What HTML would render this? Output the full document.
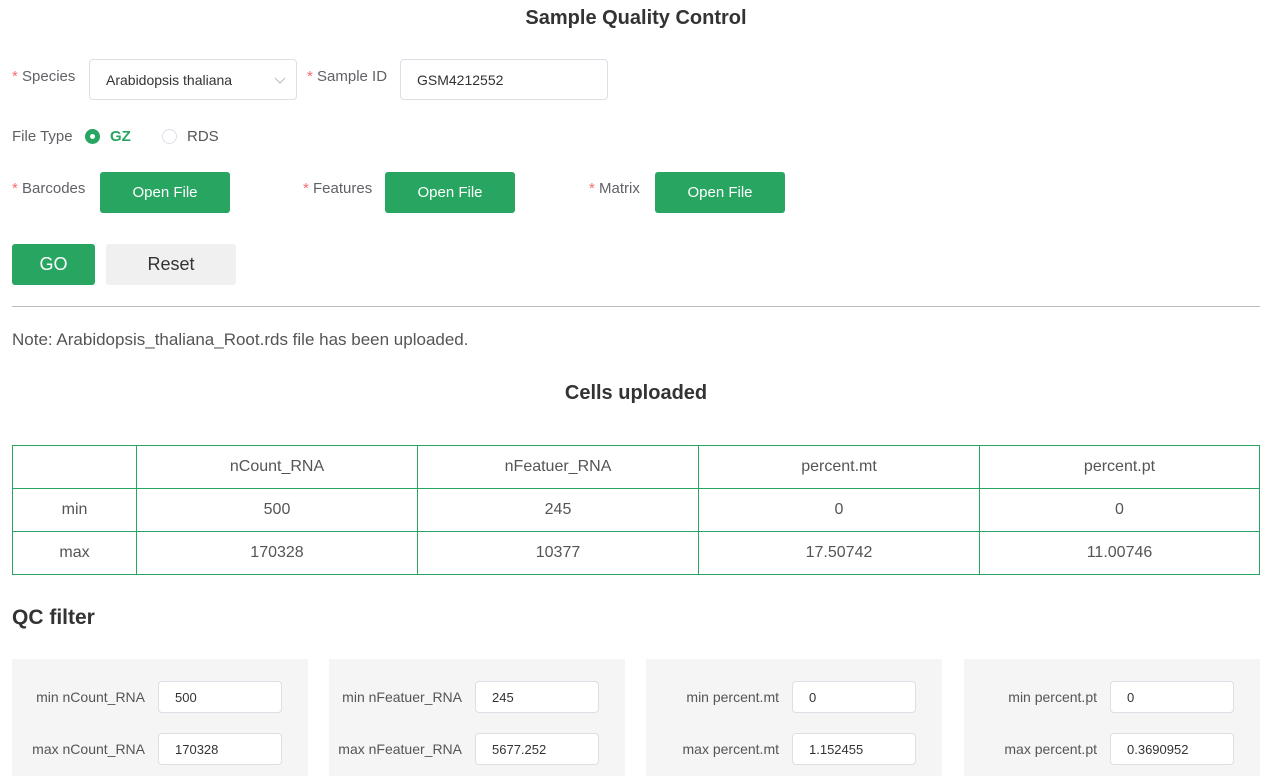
<!DOCTYPE html>
<html><head><meta charset="utf-8"><style>
*{box-sizing:border-box;margin:0;padding:0}
body{width:1266px;height:776px;overflow:hidden;background:#fff;font-family:"Liberation Sans",sans-serif;color:#555;position:relative}
.a{position:absolute}
.lbl{font-size:15px;color:#606266}
.star{color:#f56c6c}
.inp{position:absolute;border:1px solid #dcdfe6;border-radius:4px;background:#fff;font-size:14px;color:#333;padding-left:16px;display:flex;align-items:center}
.btn{position:absolute;background:#27a561;color:#fff;border-radius:3px;display:flex;align-items:center;justify-content:center;font-size:15px}
table{border-collapse:collapse;position:absolute;left:12px;top:445px;width:1248px}
td{border:1px solid #27a561;height:43px;text-align:center;font-size:16px;color:#555}
.panel{position:absolute;top:659px;width:296px;height:117px;background:#f5f5f5}
.pl{position:absolute;right:163px;font-size:14px;color:#555}
.pi{position:absolute;left:146px;width:124px;height:32px;border:1px solid #dcdfe6;border-radius:4px;background:#fff;font-size:13px;color:#333;padding-left:16px;display:flex;align-items:center}
</style></head><body>
<div class="a" style="left:0;width:1272px;top:7px;text-align:center;font-size:20px;font-weight:bold;color:#333">Sample Quality Control</div>

<div class="a lbl" style="left:12px;top:68px"><span class="star">*</span> Species</div>
<div class="inp" style="left:89px;top:59px;width:208px;height:41px">Arabidopsis thaliana
<svg class="a" style="left:184px;top:17px" width="12" height="8"><path d="M1 1L6 6L11 1" fill="none" stroke="#bbb" stroke-width="1"/></svg></div>
<div class="a lbl" style="left:307px;top:68px"><span class="star">*</span> Sample ID</div>
<div class="inp" style="left:400px;top:59px;width:208px;height:41px">GSM4212552</div>

<div class="a lbl" style="left:12px;top:128px">File Type</div>
<div class="a" style="left:85px;top:129px;width:15px;height:15px;border-radius:50%;background:#27a561"><div class="a" style="left:5px;top:5px;width:5px;height:5px;border-radius:50%;background:#fff"></div></div>
<div class="a" style="left:110px;top:128px;font-size:15px;color:#27a561;font-weight:bold">GZ</div>
<div class="a" style="left:162px;top:129px;width:15px;height:15px;border-radius:50%;border:1px solid #dcdfe6"></div>
<div class="a" style="left:187px;top:128px;font-size:15px;color:#555">RDS</div>

<div class="a lbl" style="left:12px;top:180px"><span class="star">*</span> Barcodes</div>
<div class="btn" style="left:100px;top:172px;width:130px;height:41px">Open File</div>
<div class="a lbl" style="left:303px;top:180px"><span class="star">*</span> Features</div>
<div class="btn" style="left:385px;top:172px;width:130px;height:41px">Open File</div>
<div class="a lbl" style="left:589px;top:180px"><span class="star">*</span> Matrix</div>
<div class="btn" style="left:655px;top:172px;width:130px;height:41px">Open File</div>

<div class="btn" style="left:12px;top:244px;width:83px;height:41px;font-size:18px">GO</div>
<div class="btn" style="left:106px;top:244px;width:130px;height:41px;font-size:18px;background:#f0f0f0;color:#333">Reset</div>

<div class="a" style="left:12px;top:306px;width:1248px;height:1px;background:#bbb"></div>
<div class="a" style="left:12px;top:330px;font-size:17px;color:#555">Note: Arabidopsis_thaliana_Root.rds file has been uploaded.</div>
<div class="a" style="left:0;width:1272px;top:382px;text-align:center;font-size:20px;font-weight:bold;color:#333">Cells uploaded</div>

<table>
<tr><td style="width:124px"></td><td style="width:281px">nCount_RNA</td><td style="width:281px">nFeatuer_RNA</td><td style="width:281px">percent.mt</td><td>percent.pt</td></tr>
<tr><td>min</td><td>500</td><td>245</td><td>0</td><td>0</td></tr>
<tr><td>max</td><td>170328</td><td>10377</td><td>17.50742</td><td>11.00746</td></tr>
</table>

<div class="a" style="left:12px;top:606px;font-size:21px;font-weight:bold;color:#333">QC filter</div>

<div class="panel" style="left:12px"><div class="pl" style="top:30px">min nCount_RNA</div><div class="pi" style="top:22px">500</div><div class="pl" style="top:82px">max nCount_RNA</div><div class="pi" style="top:74px">170328</div></div>
<div class="panel" style="left:329px"><div class="pl" style="top:30px">min nFeatuer_RNA</div><div class="pi" style="top:22px">245</div><div class="pl" style="top:82px">max nFeatuer_RNA</div><div class="pi" style="top:74px">5677.252</div></div>
<div class="panel" style="left:646px"><div class="pl" style="top:30px">min percent.mt</div><div class="pi" style="top:22px">0</div><div class="pl" style="top:82px">max percent.mt</div><div class="pi" style="top:74px">1.152455</div></div>
<div class="panel" style="left:964px"><div class="pl" style="top:30px">min percent.pt</div><div class="pi" style="top:22px">0</div><div class="pl" style="top:82px">max percent.pt</div><div class="pi" style="top:74px">0.3690952</div></div>
</body></html>
